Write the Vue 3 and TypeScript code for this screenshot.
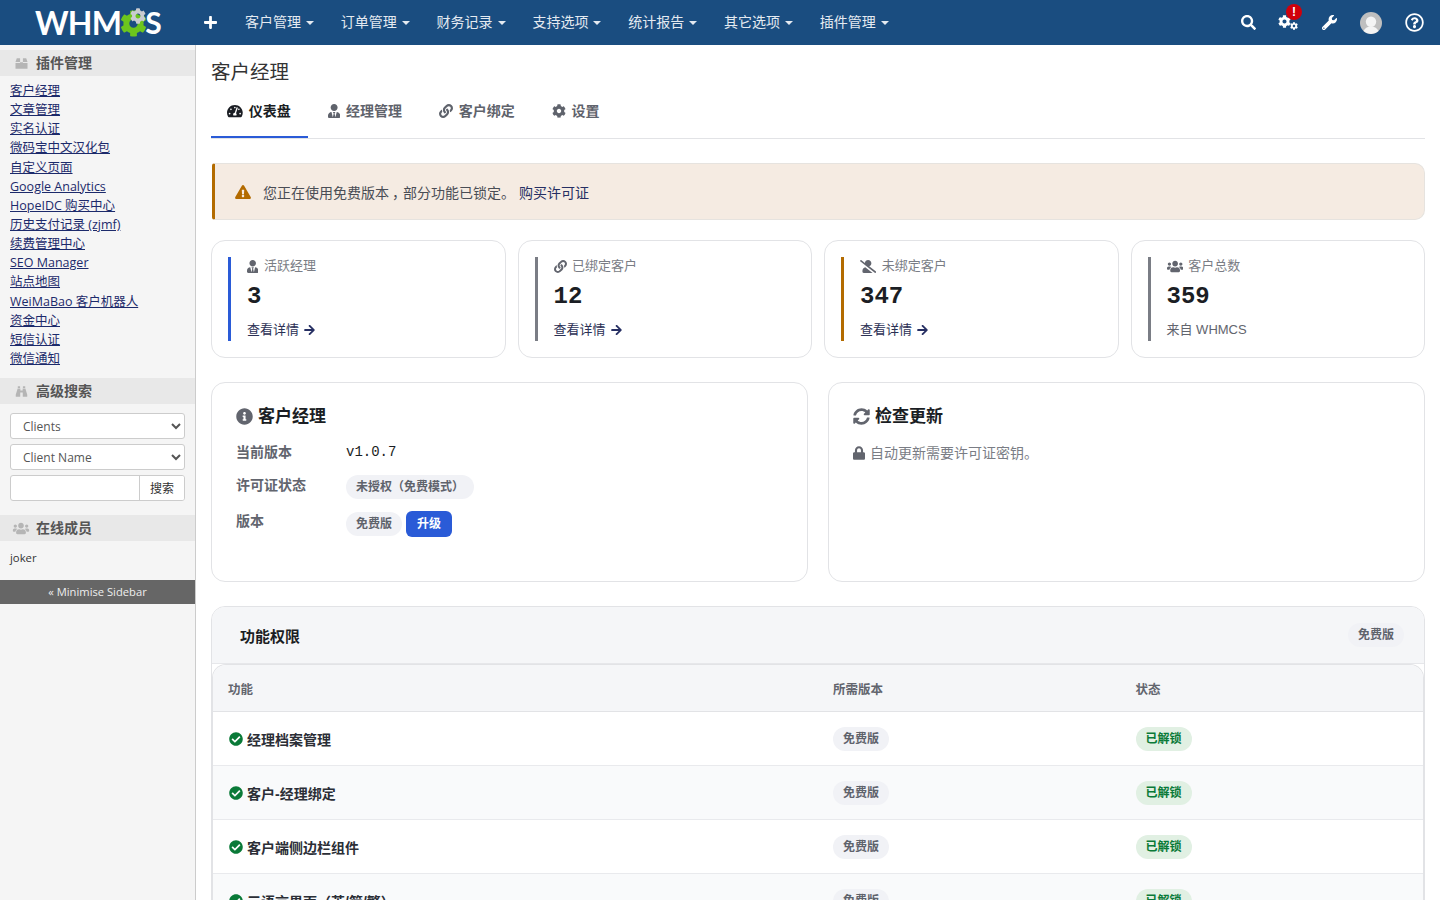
<script setup lang="ts">
const P: Record<string, { vb: string; d: string }> = {
  search: { vb: '0 0 512 512', d: 'M505 442.7L405.3 343c-4.5-4.5-10.6-7-17-7H372c27.6-35.3 44-79.7 44-128C416 93.1 322.9 0 208 0S0 93.1 0 208s93.1 208 208 208c48.3 0 92.7-16.4 128-44v16.3c0 6.4 2.5 12.5 7 17l99.7 99.7c9.4 9.4 24.6 9.4 33.9 0l28.3-28.3c9.4-9.4 9.4-24.6.1-34zM208 336c-70.7 0-128-57.2-128-128 0-70.7 57.2-128 128-128 70.7 0 128 57.2 128 128 0 70.7-57.2 128-128 128z' },
  check: { vb: '0 0 512 512', d: 'M504 256c0 136.967-111.033 248-248 248S8 392.967 8 256 119.033 8 256 8s248 111.033 248 248zM227.314 387.314l184-184c6.248-6.248 6.248-16.379 0-22.627l-22.627-22.627c-6.248-6.249-16.379-6.249-22.628 0L216 308.118l-70.059-70.059c-6.248-6.248-16.379-6.248-22.628 0l-22.627 22.627c-6.248 6.248-6.248 16.379 0 22.627l104 104c6.249 6.249 16.379 6.249 22.628.001z' },
  info: { vb: '0 0 512 512', d: 'M256 8C119.043 8 8 119.083 8 256c0 136.997 111.043 248 248 248s248-111.003 248-248C504 119.083 392.957 8 256 8zm0 110c23.196 0 42 18.804 42 42s-18.804 42-42 42-42-18.804-42-42 18.804-42 42-42zm56 254c0 6.627-5.373 12-12 12h-88c-6.627 0-12-5.373-12-12v-24c0-6.627 5.373-12 12-12h12v-64h-12c-6.627 0-12-5.373-12-12v-24c0-6.627 5.373-12 12-12h64c6.627 0 12 5.373 12 12v100h12c6.627 0 12 5.373 12 12v24z' },
  warn: { vb: '0 0 576 512', d: 'M569.517 440.013C587.975 472.007 564.806 512 527.94 512H48.054c-36.937 0-59.999-40.055-41.577-71.987L246.423 23.985c18.467-32.009 64.72-31.951 83.154 0l239.94 416.028zM288 354c-25.405 0-46 20.595-46 46s20.595 46 46 46 46-20.595 46-46-20.595-46-46-46zm-43.673-165.346l7.418 136c.347 6.364 5.609 11.346 11.982 11.346h48.546c6.373 0 11.635-4.982 11.982-11.346l7.418-136c.375-6.874-5.098-12.654-11.982-12.654h-63.383c-6.884 0-12.356 5.78-11.981 12.654z' },
  arrow: { vb: '0 0 448 512', d: 'M190.5 66.9l22.2-22.2c9.4-9.4 24.6-9.4 33.9 0L441 239c9.4 9.4 9.4 24.6 0 33.9L246.6 467.3c-9.4 9.4-24.6 9.4-33.9 0l-22.2-22.2c-9.5-9.5-9.3-25 .4-34.3L311.4 296H24c-13.3 0-24-10.7-24-24v-32c0-13.3 10.7-24 24-24h287.4L190.9 101.2c-9.8-9.3-10-24.8-.4-34.3z' },
  lock: { vb: '0 0 448 512', d: 'M400 224h-24v-72C376 68.2 307.8 0 224 0S72 68.2 72 152v72H48c-26.5 0-48 21.5-48 48v192c0 26.5 21.5 48 48 48h352c26.5 0 48-21.5 48-48V272c0-26.5-21.5-48-48-48zm-104 0H152v-72c0-39.7 32.3-72 72-72s72 32.3 72 72v72z' },
  sync: { vb: '0 0 512 512', d: 'M370.72 133.28C339.458 104.008 298.888 87.962 255.848 88c-77.458.068-144.328 53.178-162.791 126.85-1.344 5.363-6.122 9.15-11.651 9.15H24.103c-7.498 0-13.194-6.807-11.807-14.176C33.933 94.924 134.813 8 256 8c66.448 0 126.791 26.136 171.315 68.685L463.03 40.97C478.149 25.851 504 36.559 504 57.941V192c0 13.255-10.745 24-24 24H345.941c-21.382 0-32.09-25.851-16.971-40.971l41.75-41.749zM32 296h134.059c21.382 0 32.09 25.851 16.971 40.971l-41.75 41.75c31.262 29.273 71.835 45.319 114.876 45.28 77.418-.07 144.315-53.144 162.787-126.849 1.344-5.363 6.122-9.15 11.651-9.15h57.304c7.498 0 13.194 6.807 11.807 14.176C478.067 417.076 377.187 504 256 504c-66.448 0-126.791-26.136-171.315-68.685L48.97 471.03C33.851 486.149 8 475.441 8 454.059V320c0-13.255 10.745-24 24-24z' },
  cog: { vb: '0 0 512 512', d: 'M487.4 315.7l-42.6-24.6c4.3-23.2 4.3-47 0-70.2l42.6-24.6c4.9-2.8 7.1-8.6 5.5-14-11.1-35.6-30-67.8-54.7-94.6-3.8-4.1-10-5.1-14.8-2.3L380.8 110c-17.9-15.4-38.5-27.3-60.8-35.1V25.8c0-5.6-3.9-10.5-9.4-11.7-36.7-8.2-74.3-7.8-109.2 0-5.5 1.2-9.4 6.1-9.4 11.7V75c-22.2 7.9-42.8 19.8-60.8 35.1L88.7 85.5c-4.9-2.8-11-1.9-14.8 2.3-24.7 26.7-43.6 58.9-54.7 94.6-1.7 5.4.6 11.2 5.5 14L67.3 221c-4.3 23.2-4.3 47 0 70.2l-42.6 24.6c-4.9 2.8-7.1 8.6-5.5 14 11.1 35.6 30 67.8 54.7 94.6 3.8 4.1 10 5.1 14.8 2.3l42.6-24.6c17.9 15.4 38.5 27.3 60.8 35.1v49.2c0 5.6 3.9 10.5 9.4 11.7 36.7 8.2 74.3 7.8 109.2 0 5.5-1.2 9.4-6.1 9.4-11.7v-49.2c22.2-7.9 42.8-19.8 60.8-35.1l42.6 24.6c4.9 2.8 11 1.9 14.8-2.3 24.7-26.7 43.6-58.9 54.7-94.6 1.5-5.5-.7-11.3-5.6-14.1zM256 336c-44.1 0-80-35.9-80-80s35.9-80 80-80 80 35.9 80 80-35.9 80-80 80z' },
  link: { vb: '0 0 512 512', d: 'M326.612 185.391c59.747 59.809 58.927 155.698.36 214.59-.11.12-.24.25-.36.37l-67.2 67.2c-59.27 59.27-155.699 59.262-214.96 0-59.27-59.26-59.27-155.7 0-214.96l37.106-37.106c9.84-9.84 26.786-3.3 27.294 10.606.648 17.722 3.826 35.527 9.69 52.721 1.986 5.822.567 12.262-3.783 16.612l-13.087 13.087c-28.026 28.026-28.905 73.66-1.155 101.96 28.024 28.579 74.086 28.749 102.325.51l67.2-67.19c28.191-28.191 28.073-73.757 0-101.83-3.701-3.694-7.429-6.564-10.341-8.569a16.037 16.037 0 0 1-6.947-12.606c-.396-10.567 3.348-21.456 11.698-29.806l21.054-21.055c5.521-5.521 14.182-6.199 20.584-1.731a152.482 152.482 0 0 1 20.522 17.197zM467.547 44.449c-59.261-59.262-155.69-59.27-214.96 0l-67.2 67.2c-.12.12-.25.25-.36.37-58.566 58.892-59.387 154.781.36 214.59a152.454 152.454 0 0 0 20.521 17.196c6.402 4.468 15.064 3.789 20.584-1.731l21.054-21.055c8.35-8.35 12.094-19.239 11.698-29.806a16.037 16.037 0 0 0-6.947-12.606c-2.912-2.005-6.64-4.875-10.341-8.569-28.073-28.073-28.191-73.639 0-101.83l67.2-67.19c28.239-28.239 74.3-28.069 102.325.51 27.75 28.3 26.872 73.934-1.155 101.96l-13.087 13.087c-4.35 4.35-5.769 10.79-3.783 16.612 5.864 17.194 9.042 34.999 9.69 52.721.509 13.906 17.454 20.446 27.294 10.606l37.106-37.106c59.271-59.259 59.271-155.699.001-214.959z' },
  gauge: { vb: '0 0 576 512', d: 'M288 32C128.94 32 0 160.94 0 320c0 52.8 14.25 102.26 39.06 144.8 5.61 9.62 16.3 15.2 27.44 15.2h443c11.14 0 21.83-5.58 27.44-15.2C561.75 422.26 576 372.8 576 320c0-159.06-128.94-288-288-288zm0 64c14.71 0 26.58 10.13 30.32 23.65-1.11 2.26-2.64 4.23-3.45 6.67l-9.22 27.67c-5.13 3.49-10.97 6.01-17.64 6.01-17.67 0-32-14.33-32-32S270.33 96 288 96zM96 384c-17.67 0-32-14.33-32-32s14.33-32 32-32 32 14.33 32 32-14.33 32-32 32zm48-160c-17.67 0-32-14.33-32-32s14.33-32 32-32 32 14.33 32 32-14.33 32-32 32zm246.77-72.41l-61.33 184C343.13 347.33 352 364.54 352 384c0 11.72-3.38 22.55-8.88 32H232.88c-5.5-9.45-8.88-20.28-8.88-32 0-33.94 26.5-61.43 59.9-63.59l61.34-184.01c4.17-12.56 17.73-19.45 30.36-15.17 12.57 4.19 19.35 17.79 15.17 30.36zm14.66 57.2l15.52-46.55c3.47-1.29 7.13-2.23 11.05-2.23 17.67 0 32 14.33 32 32s-14.33 32-32 32c-11.38-.01-20.89-6.28-26.57-15.22zM480 384c-17.67 0-32-14.33-32-32s14.33-32 32-32 32 14.33 32 32-14.33 32-32 32z' },
  userTie: { vb: '0 0 448 512', d: 'M224 256c70.7 0 128-57.3 128-128S294.7 0 224 0 96 57.3 96 128s57.3 128 128 128zm95.8 32.6L272 480l-32-136 32-56h-96l32 56-32 136-47.8-191.4C56.9 292 0 350.3 0 422.4V464c0 26.5 21.5 48 48 48h352c26.5 0 48-21.5 48-48v-41.6c0-72.1-56.9-130.4-128.2-133.8z' },
  users: { vb: '0 0 640 512', d: 'M96 224c35.3 0 64-28.7 64-64s-28.7-64-64-64-64 28.7-64 64 28.7 64 64 64zm448 0c35.3 0 64-28.7 64-64s-28.7-64-64-64-64 28.7-64 64 28.7 64 64 64zm32 32h-64c-17.6 0-33.5 7.1-45.1 18.6 40.3 22.1 68.9 62 75.1 109.4h66c17.7 0 32-14.3 32-32v-32c0-35.3-28.7-64-64-64zm-256 0c61.9 0 112-50.1 112-112S381.9 32 320 32 208 82.1 208 144s50.1 112 112 112zm76.8 32h-8.3c-20.8 10-43.9 16-68.5 16s-47.6-6-68.5-16h-8.3C179.6 288 128 339.6 128 403.2V432c0 26.5 21.5 48 48 48h288c26.5 0 48-21.5 48-48v-28.8c0-63.6-51.6-115.2-115.2-115.2zm-223.7-13.4C161.5 263.1 145.6 256 128 256H64c-35.3 0-64 28.7-64 64v32c0 17.7 14.3 32 32 32h65.9c6.3-47.4 34.9-87.3 75.2-109.4z' },
  userSlash: { vb: '0 0 640 512', d: 'M633.8 458.1L362.3 248.3C412.1 230.7 448 183.8 448 128 448 57.3 390.7 0 320 0c-67.1 0-121.5 51.8-126.9 117.4L45.5 3.4C38.5-2 28.5-.8 23 6.2L3.4 31.4c-5.4 7-4.2 17 2.8 22.4l588.4 454.7c7 5.4 17 4.2 22.5-2.8l19.6-25.3c5.4-6.8 4.1-16.9-2.9-22.3zM96 422.4V464c0 26.5 21.5 48 48 48h350.2L207.4 290.3C144.2 301.3 96 356 96 422.4z' },
  wrench: { vb: '0 0 512 512', d: 'M507.73 109.1c-2.24-9.03-13.54-12.09-20.12-5.51l-74.36 74.36-67.88-11.31-11.31-67.88 74.36-74.36c6.62-6.62 3.43-17.9-5.66-20.16-47.38-11.74-99.55.91-136.58 37.93-39.64 39.64-50.55 97.1-34.05 147.2L18.74 402.76c-24.99 24.99-24.99 65.51 0 90.5 24.99 24.99 65.51 24.99 90.5 0l213.21-213.21c50.12 16.71 107.47 5.68 147.37-34.22 37.07-37.07 49.7-89.32 37.91-136.73zM64 472c-13.25 0-24-10.75-24-24 0-13.26 10.75-24 24-24s24 10.74 24 24c0 13.25-10.75 24-24 24z' },
  help: { vb: '0 0 512 512', d: 'M256 8C119.043 8 8 119.083 8 256c0 136.997 111.043 248 248 248s248-111.003 248-248C504 119.083 392.957 8 256 8zm0 448c-110.532 0-200-89.431-200-200 0-110.495 89.472-200 200-200 110.491 0 200 89.471 200 200 0 110.53-89.431 200-200 200zm107.244-255.2c0 67.052-72.421 68.084-72.421 92.863V300c0 6.627-5.373 12-12 12h-45.647c-6.627 0-12-5.373-12-12v-8.659c0-35.745 27.1-50.034 47.579-61.516 17.561-9.845 28.324-16.541 28.324-29.579 0-17.246-21.999-28.693-39.784-28.693-23.189 0-33.894 10.977-48.942 29.969-4.057 5.12-11.46 6.071-16.666 2.124l-27.824-21.098c-5.107-3.872-6.251-11.066-2.644-16.363C184.846 131.491 214.94 112 261.794 112c49.071 0 101.45 38.304 101.45 88.8zM298 368c0 23.159-18.841 42-42 42s-42-18.841-42-42 18.841-42 42-42 42 18.841 42 42z' },
  plus: { vb: '0 0 448 512', d: 'M416 208H272V64c0-17.67-14.33-32-32-32h-32c-17.67 0-32 14.33-32 32v144H32c-17.67 0-32 14.33-32 32v32c0 17.67 14.33 32 32 32h144v144c0 17.67 14.33 32 32 32h32c17.67 0 32-14.33 32-32V304h144c17.67 0 32-14.33 32-32v-32c0-17.67-14.33-32-32-32z' },
  box: { vb: '0 0 512 512', d: 'M20 200L70 50h130v150zM312 50h130l50 150H312zM20 232h180v-30h112v30h180v230H20z' },
  bino: { vb: '0 0 512 512', d: 'M110 50h90v70h-90zM312 50h90v70h-90zM104 140h106v80h92v-80h106l74 240v80H306V300H206v160H30v-80z' }
}
const nav = ['客户管理', '订单管理', '财务记录', '支持选项', '统计报告', '其它选项', '插件管理']
const links = ['客户经理', '文章管理', '实名认证', '微码宝中文汉化包', '自定义页面', 'Google Analytics', 'HopeIDC 购买中心', '历史支付记录 (zjmf)', '续费管理中心', 'SEO Manager', '站点地图', 'WeiMaBao 客户机器人', '资金中心', '短信认证', '微信通知']
const tabs = [
  { label: '仪表盘', icon: 'gauge', active: true },
  { label: '经理管理', icon: 'userTie', active: false },
  { label: '客户绑定', icon: 'link', active: false },
  { label: '设置', icon: 'cog', active: false }
]
const stats = [
  { label: '活跃经理', icon: 'userTie', value: '3', color: '#2a5bd7', more: true },
  { label: '已绑定客户', icon: 'link', value: '12', color: '#7a7d85', more: true },
  { label: '未绑定客户', icon: 'userSlash', value: '347', color: '#b36b00', more: true },
  { label: '客户总数', icon: 'users', value: '359', color: '#7a7d85', more: false }
]
const features = ['经理档案管理', '客户-经理绑定', '客户端侧边栏组件', '三语言界面（英/简/繁）']
</script>

<template>
  <div class="page">
    <header class="top">
      <div class="logo">
        <span>WHM</span>
        <svg class="logo-gear" viewBox="0 0 512 512"><path fill="#6cc51d" :d="P.cog.d" /></svg>
        <svg class="logo-gear-sm" viewBox="0 0 512 512"><path fill="#c9ccd0" :d="P.cog.d" /></svg>
        <span class="logo-s">S</span>
      </div>
      <svg class="ic plus" :viewBox="P.plus.vb"><path :d="P.plus.d" /></svg>
      <nav class="nav">
        <a v-for="n in nav" :key="n" class="nav-item">{{ n }}<i class="caret"></i></a>
      </nav>
      <div class="top-right">
        <svg class="ic t-search" :viewBox="P.search.vb"><path :d="P.search.d" /></svg>
        <span class="cogs">
          <svg class="cog-a" :viewBox="P.cog.vb"><path :d="P.cog.d" /></svg>
          <svg class="cog-b" :viewBox="P.cog.vb"><path :d="P.cog.d" /></svg>
          <b class="alert-dot">!</b>
        </span>
        <svg class="ic t-wrench" :viewBox="P.wrench.vb"><path :d="P.wrench.d" /></svg>
        <svg class="avatar" viewBox="0 0 22 22">
          <circle cx="11" cy="11" r="11" fill="#bfbfbf" />
          <circle cx="11" cy="9.800" r="5.200" fill="#f4f4f4" />
          <path d="M3.500 19c1.500-3.400 4.500-4.600 7.500-4.600s6 1.200 7.500 4.600a11 11 0 0 1-15 0z" fill="#f4f4f4" />
        </svg>
        <svg class="ic t-help" :viewBox="P.help.vb"><path :d="P.help.d" /></svg>
      </div>
    </header>

    <div class="body">
      <aside class="side">
        <h3 class="side-h"><svg class="side-ic" :viewBox="P.box.vb"><path :d="P.box.d" /></svg>插件管理</h3>
        <ul class="side-links">
          <li v-for="l in links" :key="l"><a>{{ l }}</a></li>
        </ul>
        <h3 class="side-h"><svg class="side-ic" :viewBox="P.bino.vb"><path :d="P.bino.d" /></svg>高级搜索</h3>
        <div class="side-form">
          <select class="sel"><option>Clients</option></select>
          <select class="sel"><option>Client Name</option></select>
          <div class="search-group">
            <input class="search-in" type="text" />
            <button class="search-btn">搜索</button>
          </div>
        </div>
        <h3 class="side-h"><svg class="side-ic wide" :viewBox="P.users.vb"><path :d="P.users.d" /></svg>在线成员</h3>
        <div class="online">joker</div>
        <div class="minimise">« Minimise Sidebar</div>
      </aside>

      <main class="main">
        <h1 class="title">客户经理</h1>
        <div class="tabs">
          <a v-for="t in tabs" :key="t.label" class="tab" :class="{ active: t.active }">
            <svg class="tab-ic" :viewBox="P[t.icon].vb"><path :d="P[t.icon].d" /></svg>{{ t.label }}
          </a>
        </div>

        <div class="alert">
          <svg class="alert-ic" :viewBox="P.warn.vb"><path :d="P.warn.d" /></svg>
          <span>您正在使用免费版本<span class="cm">，</span>部分功能已锁定。</span>
          <a class="alert-link">购买许可证</a>
        </div>

        <div class="stats">
          <div v-for="s in stats" :key="s.label" class="card stat">
            <div class="stat-in" :style="{ borderLeftColor: s.color }">
              <div class="stat-label"><svg class="stat-ic" :viewBox="P[s.icon].vb"><path :d="P[s.icon].d" /></svg>{{ s.label }}</div>
              <div class="stat-val">{{ s.value }}</div>
              <a v-if="s.more" class="stat-more">查看详情<svg class="arrow" :viewBox="P.arrow.vb"><path :d="P.arrow.d" /></svg></a>
              <span v-else class="stat-src">来自 WHMCS</span>
            </div>
          </div>
        </div>

        <div class="two">
          <section class="card panel">
            <h2 class="panel-h"><svg class="panel-ic" :viewBox="P.info.vb"><path :d="P.info.d" /></svg>客户经理</h2>
            <div class="kv"><span class="k">当前版本</span><code class="ver">v1.0.7</code></div>
            <div class="kv kv2"><span class="k">许可证状态</span><span class="badge">未授权（免费模式）</span></div>
            <div class="kv kv3"><span class="k">版本</span><span class="badge">免费版</span><a class="upgrade">升级</a></div>
          </section>
          <section class="card panel">
            <h2 class="panel-h"><svg class="panel-ic" :viewBox="P.sync.vb"><path :d="P.sync.d" /></svg>检查更新</h2>
            <p class="muted"><svg class="lock" :viewBox="P.lock.vb"><path :d="P.lock.d" /></svg>自动更新需要许可证密钥。</p>
          </section>
        </div>

        <section class="card perm">
          <div class="perm-h">
            <span class="perm-t">功能权限</span>
            <span class="badge">免费版</span>
          </div>
          <div class="tbl-wrap">
            <table class="tbl">
              <colgroup><col class="c1" /><col class="c2" /><col class="c3" /></colgroup>
              <thead><tr><th>功能</th><th>所需版本</th><th>状态</th></tr></thead>
              <tbody>
                <tr v-for="f in features" :key="f">
                  <td><div class="feat"><svg class="check" :viewBox="P.check.vb"><path :d="P.check.d" /></svg>{{ f }}</div></td>
                  <td><span class="badge">免费版</span></td>
                  <td><span class="badge ok">已解锁</span></td>
                </tr>
              </tbody>
            </table>
          </div>
        </section>
      </main>
    </div>
  </div>
</template>

<style>
html, body { margin: 0; height: 100%; overflow: hidden; background: #fff; }
</style>

<style scoped>
.page { height: 900px; overflow: hidden; display: flex; flex-direction: column; font-family: "Open Sans", "Noto Sans CJK SC", sans-serif; color: #333; }
.top { height: 45px; flex: none; background: #1a4d80; display: flex; align-items: center; color: #fff; }
.logo { width: 204px; flex: none; box-sizing: border-box; padding-left: 35px; display: flex; align-items: center; position: relative; font-family: Lato, sans-serif; font-weight: 700; font-size: 32px; letter-spacing: -0.8px; color: #fff; line-height: 45px; }
.logo-gear { width: 27px; height: 27px; margin: 1px -2px 0 -1px; flex: none; }
.logo-gear-sm { position: absolute; left: 130px; top: 8px; width: 16px; height: 16px; }
.logo-s { font-size: 30px; position: relative; }
.ic { fill: currentColor; display: block; }
.plus { width: 13px; height: 15px; flex: none; }
.nav { display: flex; margin-left: 28px; }
.nav-item { display: flex; align-items: center; font-size: 14px; line-height: 20px; margin-top: -2px; color: #e4eaf1; padding-right: 26.8px; }
.caret { width: 0; height: 0; border: 4px solid transparent; border-top-color: #e4eaf1; border-bottom-width: 0; margin: 2px 0 0 5px; }
.top-right { margin-left: auto; display: flex; align-items: center; color: #fff; }
.t-search { width: 15px; height: 15px; margin-right: 22px; }
.cogs { position: relative; display: block; width: 20px; height: 17px; margin-right: 24px; }
.cog-a { position: absolute; left: 0; top: 1px; width: 13px; height: 13px; fill: #fff; }
.cog-b { position: absolute; left: 12px; top: 8px; width: 8px; height: 8px; fill: #fff; }
.alert-dot { position: absolute; left: 8px; top: -10px; width: 16px; height: 16px; border-radius: 50%; background: #d0000b; color: #fff; font: 700 12px/16px "Liberation Sans", sans-serif; text-align: center; }
.t-wrench { width: 15px; height: 15px; margin-right: 23px; }
.avatar { width: 22px; height: 22px; margin-right: 23px; display: block; }
.t-help { width: 19px; height: 19px; margin-right: 16px; }

.body { flex: 1; display: flex; min-height: 0; }
.side { width: 195px; flex: none; background: #f5f5f5; border-right: 1px solid #ccc; padding-top: 5px; }
.side-h { margin: 0; height: 26px; background: #e8e8e8; display: flex; align-items: center; padding-left: 15px; font-size: 14px; line-height: 26px; font-weight: 700; color: #555; }
.side-ic { width: 13px; height: 13px; fill: #b5b5b5; margin-right: 8px; flex: none; }
.side-ic.wide { width: 18px; margin: 0 6px 0 -3px; }
.side-links { list-style: none; margin: 0 0 10px; padding: 5px 0 0 10px; font-size: 12.5px; line-height: 19.14px; }
.side-links a { color: #1c2a6b; text-decoration: underline; }
.side-form { padding: 9px 10px 14px; display: flex; flex-direction: column; gap: 5px; }
.sel { height: 26px; width: 100%; box-sizing: border-box; font: 12px "Open Sans", sans-serif; color: #555; background: #fff; border: 1px solid #ccc; border-radius: 3px; padding: 0 8px; }
.search-group { display: flex; height: 26px; box-sizing: border-box; border: 1px solid #ccc; border-radius: 3px; background: #fff; overflow: hidden; }
.search-in { flex: 1; min-width: 0; border: 0; padding: 0; outline: 0; background: transparent; }
.search-btn { width: 45px; flex: none; border: 0; border-left: 1px solid #ccc; background: #fff; font: 12px "Open Sans", "Noto Sans CJK SC", sans-serif; color: #333; padding: 0; }
.online { font-size: 11.3px; padding: 8px 10px 14px; line-height: 17px; color: #333; }
.minimise { height: 24px; line-height: 24px; background: #666; color: #eee; font-size: 11.2px; text-align: center; }

.main { flex: 1; min-width: 0; padding: 0 15px; font-family: "Liberation Sans", "Noto Sans CJK SC", sans-serif; color: #1b1e24; }
.title { margin: 14px 0 0; font-size: 19.5px; font-weight: 400; line-height: 26px; color: #333; }
.tabs { display: flex; margin-top: 13px; height: 40px; border-bottom: 1px solid #e2e3e6; }
.tab { display: flex; align-items: center; box-sizing: border-box; height: 40px; padding: 0 16px 14px; margin-right: 4.75px; font-size: 14px; line-height: 26px; font-weight: 600; color: #5f636c; gap: 6px; }
.tab svg { fill: #5f636c; }
.tab.active { color: #1b1e24; font-weight: 700; padding: 0 17px 12px 16px; margin-right: 4px; border-bottom: 2px solid #2a5bd7; }
.tab.active svg { fill: #1b1e24; }
.tab-ic { height: 14px; width: auto; flex: none; }

.alert { margin: 24px 0 0 1px; height: 57px; box-sizing: border-box; display: flex; align-items: center; background: #f5ebe2; border: 1px solid #e6e3df; border-left: 3px solid #b36b00; border-radius: 3px 10px 10px 3px; padding-left: 20px; font-size: 14px; color: #4a4d55; }
.alert-ic { width: 16px; height: 14px; fill: #b36b00; margin-right: 12px; }
.cm { display: inline-block; transform: translateX(3px); }
.alert-link { margin-left: 4px; color: #262f63; }

.card { background: #fff; border: 1px solid #e2e3e6; border-radius: 14px; box-sizing: border-box; }
.stats { display: grid; grid-template-columns: repeat(4, 1fr); gap: 12px; margin-top: 20px; }
.stat { height: 118px; padding: 16px; }
.stat-in { height: 84px; box-sizing: border-box; border-left: 3px solid; padding-left: 16px; }
.stat-label { display: flex; align-items: center; font-size: 13px; line-height: 18px; color: #7a7d85; }
.stat-ic { height: 13px; width: auto; fill: #62656e; margin-right: 5.5px; flex: none; }
.stat-val { font-family: "Liberation Mono", monospace; font-size: 24px; font-weight: 700; line-height: 30px; margin-top: 7px; color: #1b1e24; }
.stat-more { display: flex; align-items: center; font-size: 13px; line-height: 18px; margin-top: 9px; color: #2b3054; }
.arrow { width: 11px; height: 12px; fill: #262f63; margin-left: 5px; }
.stat-src { display: block; font-size: 13px; line-height: 18px; margin-top: 9px; color: #62656e; }

.two { display: grid; grid-template-columns: 1fr 1fr; gap: 20px; margin-top: 24px; }
.panel { height: 200px; padding: 22px 24px; }
.panel-h { display: flex; align-items: center; margin: 0; font-size: 17px; line-height: 24px; font-weight: 700; color: #1b1e24; }
.panel-ic { width: 17px; height: 17px; fill: #62656e; margin: 0 5px 2px 0; flex: none; }
.kv { display: flex; align-items: center; margin-top: 13px; line-height: 20px; font-size: 14px; }
.kv2 { margin-top: 13px; }
.kv3 { margin-top: 12px; }
.k { width: 110px; flex: none; color: #62656e; font-weight: 600; align-self: flex-start; line-height: 20px; }
.ver { font: 14px "Liberation Mono", monospace; color: #1b1e24; }
.badge { display: inline-block; height: 24px; box-sizing: border-box; line-height: 24px; padding: 0 10px; border-radius: 12px; background: #f1f2f6; color: #5f636c; font-size: 12px; font-weight: 700; white-space: nowrap; }
.upgrade { display: inline-block; height: 26px; line-height: 26px; padding: 0 11px; margin-left: 4px; border-radius: 6px; background: #2a5bd7; color: #fff; font-size: 12px; font-weight: 700; }
.muted { margin: 14px 0 0; font-size: 14px; line-height: 20px; color: #7a7d85; display: flex; align-items: center; }
.lock { width: 12px; height: 14px; fill: #62656e; margin-right: 5px; }

.perm { margin-top: 24px; overflow: hidden; }
.perm-h { height: 56px; background: #f5f6f8; display: flex; align-items: center; justify-content: space-between; padding: 0 20px 0 28px; border-bottom: 1px solid #e6e7ea; }
.perm-t { font-size: 15px; font-weight: 700; color: #1b1e24; }
.tbl-wrap { border: 1px solid #e2e3e6; border-bottom: 0; border-radius: 14px 14px 0 0; overflow: hidden; }
.tbl { width: 100%; table-layout: fixed; border-collapse: collapse; }
.c1 { width: 50%; }
.c2 { width: 25%; }
.c3 { width: 25%; }
.tbl th { height: 46px; background: #f5f6f8; border-bottom: 1px solid #e2e3e6; text-align: left; padding: 0 15px; font-size: 12.5px; font-weight: 600; color: #62656e; }
.tbl td { height: 53px; border-bottom: 1px solid #e9eaed; padding: 0 15px; font-size: 14px; color: #2b2e36; }
.tbl tbody tr:nth-child(even) td { background: #f9fafb; }
.feat { display: flex; align-items: center; font-weight: 600; }
.check { width: 14px; height: 14px; fill: #0a7a38; margin: 0 4px 0 1px; flex: none; }
.badge.ok { background: #e1f0e3; color: #0a7a38; }
</style>
